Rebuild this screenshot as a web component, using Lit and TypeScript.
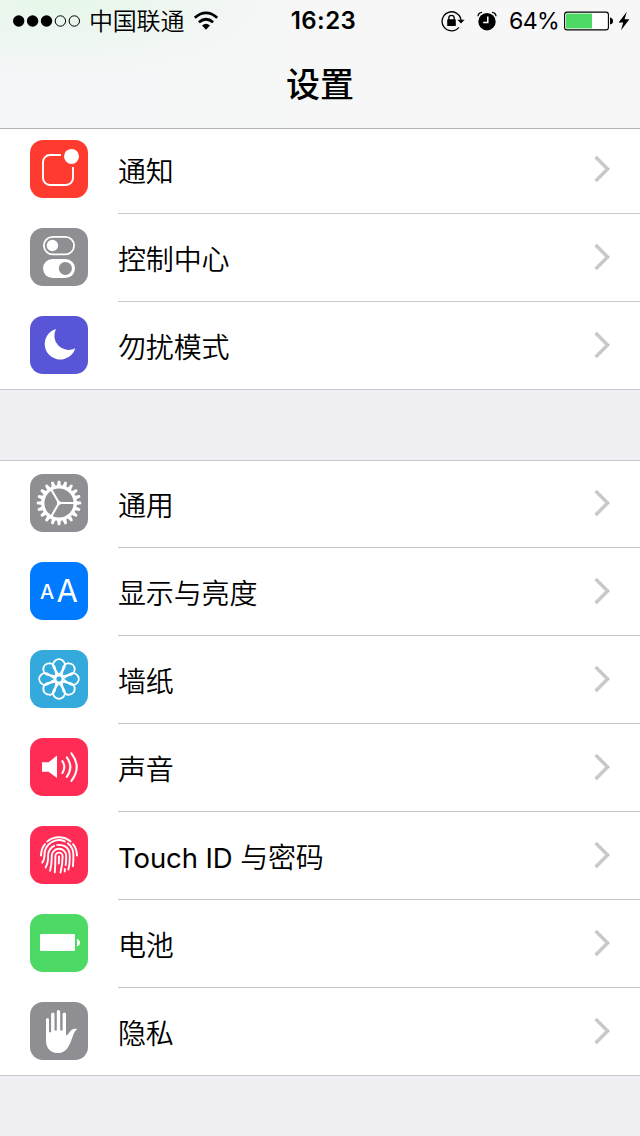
import { LitElement, html, svg, css, SVGTemplateResult } from 'lit';
import { customElement } from 'lit/decorators.js';

interface Row {
  latin?: string;
  label: string;
  color: string;
  glyph: SVGTemplateResult;
}

const spin = (n: number, shape: (deg: number) => SVGTemplateResult) =>
  Array.from({ length: n }, (_, i) => shape((i * 360) / n));

const notification = svg`
  <path d="M31 15H20a7 7 0 0 0-7 7v16a7 7 0 0 0 7 7h16a7 7 0 0 0 7-7V27" class="line" stroke-width="1.9"/>
  <circle cx="41.5" cy="16.4" r="7.5" fill="#fff"/>`;

const toggles = svg`
  <rect x="13.9" y="8.8" width="30.2" height="17.6" rx="8.8" class="line" stroke-width="1.8"/>
  <circle cx="22.4" cy="17.5" r="5.7" fill="#fff"/>
  <rect x="13" y="31" width="32" height="19" rx="9.5" fill="#fff"/>
  <circle cx="35.4" cy="40.4" r="6.5" fill="#8e8e93"/>`;

const moon = svg`
  <path d="M26 13A15.6 15.6 0 1 0 45.3 32.2A14.2 14.2 0 0 1 26 13Z" fill="#fff"/>`;

const gear = svg`
  <g transform="translate(29 29)">
    <circle r="16.2" class="line" stroke-width="3.2"/>
    ${spin(20, (d) => svg`<path d="M-2.1 -17L-1.2 -22.2H1.2L2.1 -17Z" fill="#fff" transform="rotate(${d})"/>`)}
    ${spin(3, (d) => svg`<path d="M0 0H15.5" class="line" stroke-width="2.1" transform="rotate(${d})"/>`)}
    <circle r="2" fill="#fff"/>
  </g>`;

const letters = svg`
  <text x="9.9" y="37" class="small-a">A</text>
  <text x="26.4" y="39.7" class="big-a">A</text>`;

const flower = svg`
  <g transform="translate(29 29)">
    ${spin(8, (d) => svg`<path d="M0 -3.6L-4.8 -10.4A5.9 5.9 0 1 1 4.8 -10.4Z" class="line" stroke-width="1.9" stroke-linejoin="round" transform="rotate(${d})"/>`)}
    <circle r="3.5" class="line" stroke-width="1.7"/>
  </g>`;

const speaker = svg`
  <path d="M12 24.3H18.6L27 17.6V40L18.6 33.7H12Z" fill="#fff"/>
  <g class="line" stroke-width="2.1" stroke-linecap="round">
    <path d="M32.4 23.2Q36.2 29 32.4 35"/>
    <path d="M36.8 19.4Q43.8 29 36.8 38.8"/>
    <path d="M41.4 15.4Q52 29 41.4 42.8"/>
  </g>`;

const fingerprint = svg`
  <g class="line" stroke-width="1.9" stroke-linecap="round">
    <path d="M17.2 15.6A18.2 18.2 0 0 1 40.6 15.4"/>
    <path d="M11 29.5Q11.3 22.3 15 18.2"/>
    <path d="M43 18.2Q46.6 22.4 47 29.5"/>
    <path d="M12.2 36.6Q14.7 33.4 14.5 28.5A14.4 14.4 0 0 1 34.8 15.4"/>
    <path d="M37.8 17.3Q43.4 21.4 43.4 29.2Q43.4 35.5 42.9 40.2"/>
    <path d="M15.6 41.4Q18.4 36.6 18.1 29.2Q18.4 22.7 24.2 19.8"/>
    <path d="M27.2 18.9Q39.8 18.2 39.8 30.6Q39.8 38.6 38.4 43.6"/>
    <path d="M20.1 44.8Q21.8 38.6 21.8 30A7.2 7.2 0 0 1 36.2 30Q36.2 35 35.7 39"/>
    <path d="M34.8 43V45.6"/>
    <path d="M24.8 46.4Q25.4 38.8 25.4 30.2A3.6 3.6 0 0 1 32.6 30.2Q32.6 38.5 30.5 46.6"/>
    <path d="M29 30.4Q29 34 28.8 37.5"/>
  </g>`;

const battery = svg`
  <rect x="10" y="20" width="35" height="17" rx="1" fill="#fff"/>
  <path d="M47 25Q50 26 50 28.7T47 32.4Z" fill="#fff"/>`;

const hand = svg`
  <path d="M16 17.6a1.5 1.5 0 0 1 3 0V30.2h2.1V12.2a1.7 1.7 0 0 1 3.4 0V28.6H26.8V9.7a1.7 1.7 0 0 1 3.4 0V28.6h2.4V12.2a1.7 1.7 0 0 1 3.4 0V33.6c2.2-.4 3.1-3.2 4.8-5 1.5-1.5 3.9-2.1 6.4-1.5-2.6 2-3.4 4.8-4.9 8.4C39.8 42.7 36.8 51 28.4 51 20.6 51 16 46.2 16 38.4Z" fill="#fff"/>`;

const GROUPS: Row[][] = [
  [
    { label: '通知', color: '#ff3b30', glyph: notification },
    { label: '控制中心', color: '#8e8e93', glyph: toggles },
    { label: '勿扰模式', color: '#5856d6', glyph: moon },
  ],
  [
    { label: '通用', color: '#8e8e93', glyph: gear },
    { label: '显示与亮度', color: '#007aff', glyph: letters },
    { label: '墙纸', color: '#34aadc', glyph: flower },
    { label: '声音', color: '#ff2d55', glyph: speaker },
    { latin: 'Touch ID ', label: '与密码', color: '#ff2d55', glyph: fingerprint },
    { label: '电池', color: '#4cd964', glyph: battery },
    { label: '隐私', color: '#8e8e93', glyph: hand },
  ],
];

@customElement('status-bar')
class StatusBar extends LitElement {
  static styles = css`
    :host { display: grid; grid-template-columns: 1fr auto 1fr; align-items: center; height: 41px; padding: 0 10px 0 12px; font-size: 24px; line-height: 42px; color: #000; }
    .side { display: flex; align-items: center; height: 41px; }
    .right { justify-content: flex-end; }
    svg { display: block; flex: none; }
    .carrier { margin: 1px 9px 0 8px; letter-spacing: -0.2px; font-weight: 350; }
    .time { font-weight: 600; letter-spacing: 0.4px; margin-left: 5px; }
    .alarm { margin: 0 12px 0 12px; }
    .percent { margin-right: 5px; font-size: 23.2px; letter-spacing: -0.7px; }
    .bolt { margin-left: 5px; }
  `;

  render() {
    return html`
      <div class="side">
        <svg width="69" height="14" viewBox="0 0 69 14">
          <circle cx="6.7" cy="7" r="5.7"/><circle cx="20.6" cy="7" r="5.7"/><circle cx="34.5" cy="7" r="5.7"/>
          <circle cx="48.4" cy="7" r="5.2" fill="none" stroke="#000"/><circle cx="62.3" cy="7" r="5.2" fill="none" stroke="#000"/>
        </svg>
        <span class="carrier">中国联通</span>
        <svg width="26" height="20" viewBox="0 0 26 20" fill="none" stroke="#000" stroke-width="2.8">
          <path d="M1.8 6.8Q13 -3 24.2 6.8"/>
          <path d="M5.9 11.2Q13 5.2 20.1 11.2"/>
          <path d="M9 14.6Q13 11 17 14.6L13 18.8Z" fill="#000" stroke="none"/>
        </svg>
      </div>
      <div class="time">16:23</div>
      <div class="side right">
        <svg width="24" height="22" viewBox="0 0 24 22">
          <path d="M17.9 17.4A9.5 9.5 0 1 1 20 10" fill="none" stroke="#000" stroke-width="1.3"/>
          <path d="M16.4 9.8H23.6L20 13.6Z"/>
          <rect x="6.2" y="9.3" width="8.6" height="6.8" rx=".6"/>
          <path d="M7.8 10V8a2.7 2.7 0 0 1 5.4 0v2" fill="none" stroke="#000" stroke-width="1.3"/>
        </svg>
        <svg class="alarm" width="20" height="20" viewBox="0 0 20 20">
          <circle cx="10" cy="10.7" r="8.7"/>
          <path d="M1 5.2Q1.2 1.8 5 1.4M19 5.2Q18.8 1.8 15 1.4" fill="none" stroke="#000" stroke-width="1.3"/>
          <path d="M10.8 5.6V11.4H6.2" fill="none" stroke="#fff" stroke-width="1.5"/>
        </svg>
        <span class="percent">64%</span>
        <svg width="49" height="20" viewBox="0 0 49 20">
          <rect x=".6" y="1.1" width="43.8" height="17.8" rx="2.5" fill="#fff" stroke="#000" stroke-width="1.1"/>
          <rect x="2" y="2.6" width="26" height="14.8" fill="#4cd964"/>
          <path d="M46 6.5Q49 7 49 10T46 13.5Z"/>
        </svg>
        <svg class="bolt" width="12" height="20" viewBox="0 0 12 20"><path d="M8.8 .8L.6 11.4H5.2L3 19.2L11.4 8.2H6.6Z"/></svg>
      </div>`;
  }
}

@customElement('app-root')
class AppRoot extends LitElement {
  static styles = css`
    :host { display: block; min-height: 1136px; background: #efeff4; overflow: hidden; color: #000; font-family: Inter, "Noto Sans CJK SC", sans-serif; }
    .header { box-sizing: border-box; height: 129px; border-bottom: 1px solid #b2b2b2; background: radial-gradient(ellipse 220px 75px at 55px 0, #e6f7e9, rgba(230, 247, 233, 0)), linear-gradient(90deg, #f4f6f7, #f7f7f7 70%); }
    .title { margin: 0; height: 87px; line-height: 88px; text-align: center; font-size: 34px; font-weight: 500; }
    .group { background: #fff; }
    .first { height: 261px; display: flex; flex-direction: column; justify-content: flex-end; }
    .first .row { flex: none; }
    .first .row:first-child { height: 85px; padding-top: 11px; }
    .group + .group { margin-top: 70px; border-top: 1px solid #c8c7cc; }
    .group + .group .row:first-child { height: 87px; padding-top: 13px; }
    .row { box-sizing: border-box; height: 88px; padding: 14px 0 0 30px; display: flex; background: linear-gradient(#c8c7cc, #c8c7cc) 118px 100% / 100% 1px no-repeat; }
    .row:last-child { background-position: 0 100%; }
    .icon { width: 58px; height: 58px; border-radius: 13px; flex: none; display: block; }
    .icon .line { fill: none; stroke: #fff; }
    .small-a { font-size: 20px; font-weight: 500; fill: #fff; }
    .big-a { font-size: 31px; font-weight: 400; fill: #fff; }
    .label { flex: 1; margin-left: 30px; font-size: 28px; line-height: 65px; height: 60px; font-weight: 350; white-space: pre; letter-spacing: -0.15px; }
    .latin { font-weight: 400; font-size: 27.5px; letter-spacing: -0.1px; }
    .chevron { margin: 15px 29px 0 0; flex: none; display: block; }
  `;

  private row(r: Row) {
    return html`
      <div class="row">
        <svg class="icon" viewBox="0 0 58 58" style="background:${r.color}">${r.glyph}</svg>
        <span class="label">${r.latin ? html`<span class="latin">${r.latin}</span>` : ''}${r.label}</span>
        <svg class="chevron" width="17" height="28" viewBox="0 0 17 28"><path d="M1.6 2L13.6 14L1.6 26" fill="none" stroke="#c7c7cc" stroke-width="3.4"/></svg>
      </div>`;
  }

  render() {
    return html`
      <div class="header">
        <status-bar></status-bar>
        <h1 class="title">设置</h1>
      </div>
      ${GROUPS.map((g, i) => html`<div class="group ${i === 0 ? 'first' : ''}">${g.map((r) => this.row(r))}</div>`)}`;
  }
}
